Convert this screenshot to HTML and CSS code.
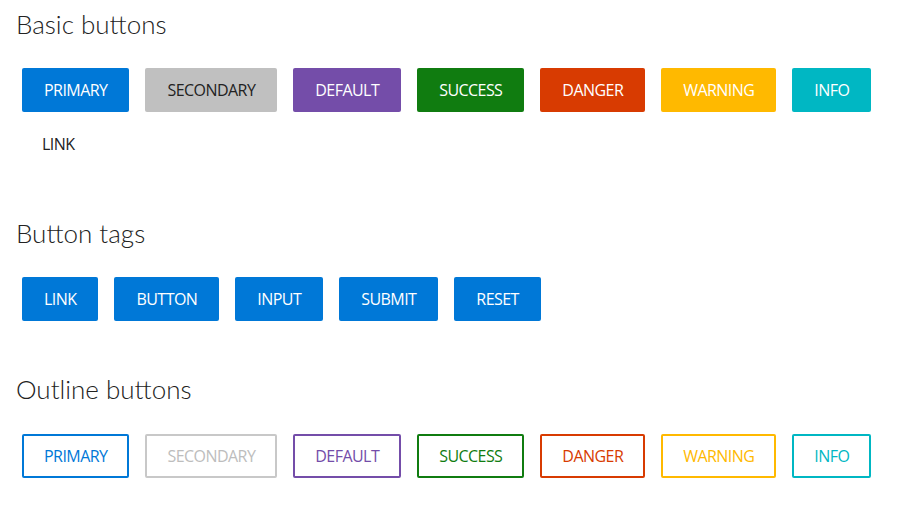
FILE: index.html
```html
<!DOCTYPE html>
<html>
<head>
<meta charset="utf-8">
<link rel="stylesheet" href="styles.css">
</head>
<body>
<section class="section">
  <h2 class="title">Basic buttons</h2>
  <div class="row">
    <a class="btn primary">PRIMARY</a>
    <a class="btn secondary">SECONDARY</a>
    <a class="btn default">DEFAULT</a>
    <a class="btn success">SUCCESS</a>
    <a class="btn danger">DANGER</a>
    <a class="btn warning">WARNING</a>
    <a class="btn info">INFO</a>
    <a class="btn link">LINK</a>
  </div>
</section>
<section class="section">
  <h2 class="title">Button tags</h2>
  <div class="row">
    <a class="btn primary">LINK</a>
    <a class="btn primary">BUTTON</a>
    <a class="btn primary">INPUT</a>
    <a class="btn primary">SUBMIT</a>
    <a class="btn primary">RESET</a>
  </div>
</section>
<section class="section">
  <h2 class="title title-outline">Outline buttons</h2>
  <div class="row">
    <a class="btn outline o-primary">PRIMARY</a>
    <a class="btn outline o-secondary">SECONDARY</a>
    <a class="btn outline o-default">DEFAULT</a>
    <a class="btn outline o-success">SUCCESS</a>
    <a class="btn outline o-danger">DANGER</a>
    <a class="btn outline o-warning">WARNING</a>
    <a class="btn outline o-info">INFO</a>
  </div>
</section>
</body>
</html>
```
FILE: styles.css
```css
html, body {
  margin: 0;
  padding: 0;
  background: #fff;
}
body {
  padding: 8px 16px 0 16px;
  font-family: "Open Sans", "Noto Sans", sans-serif;
  color: #222;
}
.section {
  margin-bottom: 52px;
}
.section:first-child {
  margin-bottom: 51px;
}
.title {
  margin: 0 0 28px 0;
  font-family: "Lato", "Open Sans", sans-serif;
  font-size: 26px;
  line-height: 32px;
  font-weight: 300;
  color: #222;
}
.title-outline {
  margin-bottom: 29px;
}
.row {
  display: flex;
  flex-wrap: wrap;
  column-gap: 16px;
  row-gap: 10px;
  padding-left: 6px;
}
.btn {
  box-sizing: border-box;
  display: inline-flex;
  align-items: center;
  justify-content: center;
  height: 44px;
  padding: 0 20px 1px 20px;
  border-radius: 2px;
  font-size: 16px;
  letter-spacing: -0.55px;
  color: #fff;
  border: 2px solid transparent;
  white-space: nowrap;
}
.primary { background: #0078d7; }
.secondary { background: #c0c0c0; color: #222; }
.default { background: #744da9; }
.success { background: #107c10; }
.danger { background: #d83b01; }
.warning { background: #ffb900; }
.info { background: #00b7c3; }
.link { background: transparent; color: #222; padding: 0 18px 1px 18px; }

.outline { background: #fff; }
.o-primary { border-color: #0078d7; color: #0078d7; }
.o-secondary { border-color: #c8c8c8; color: #bdbdbd; }
.o-default { border-color: #744da9; color: #744da9; }
.o-success { border-color: #107c10; color: #107c10; }
.o-danger { border-color: #d83b01; color: #d83b01; }
.o-warning { border-color: #ffb900; color: #ffb900; }
.o-info { border-color: #00b7c3; color: #00b7c3; }
```
